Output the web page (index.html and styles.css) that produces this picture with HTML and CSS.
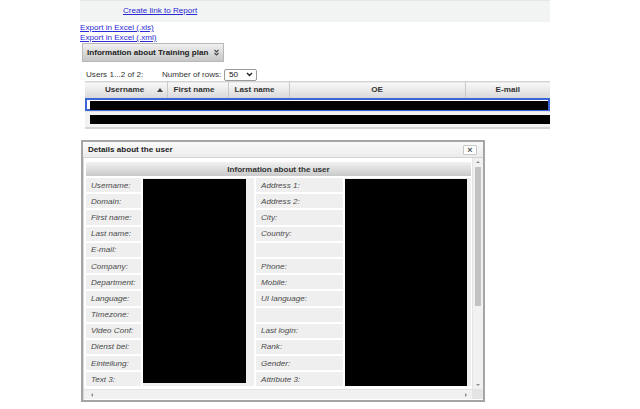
FILE: index.html
```html
<!DOCTYPE html>
<html>
<head>
<meta charset="utf-8">
<title>Training plan report</title>
<link rel="stylesheet" href="styles.css">
</head>
<body>
<div class="page">
  <div class="topbar"><a href="#" class="link">Create link to Report</a></div>
  <div class="exports">
    <a href="#">Export in Excel (.xls)</a>
    <a href="#">Export in Excel (.xml)</a>
  </div>
  <div class="toggle">
    <span>Information about Training plan</span>
    <svg class="dchev" width="7" height="8" viewBox="0 0 7 8"><polyline points="1.5,1 3.5,3 5.5,1" /><polyline points="1.5,4 3.5,6 5.5,4" /></svg>
  </div>
  <div class="toolbar">
    <span class="count">Users 1...2 of 2:</span>
    <span class="rows-label">Number of rows:</span>
    <div class="select"><span>50</span><svg width="7" height="5" viewBox="0 0 7 5"><polyline points="1,1 3.5,3.5 6,1" /></svg></div>
  </div>
  <table class="grid">
    <colgroup><col class="c1"><col class="c2"><col class="c3"><col class="c4"><col class="c5"></colgroup>
    <thead>
      <tr>
        <th><span class="th-sort">Username<svg class="sort" width="6" height="4" viewBox="0 0 6 4"><polygon points="0,4 3,0 6,4" /></svg></span></th>
        <th>First name</th>
        <th>Last name</th>
        <th>OE</th>
        <th>E-mail</th>
      </tr>
    </thead>
    <tbody>
      <tr class="row-sel"><td colspan="5"><div class="sel"><div class="redact"><div class="focus"></div></div></div></td></tr>
      <tr class="row-b"><td colspan="5"><div class="redact2"></div></td></tr>
    </tbody>
  </table>

  <div class="dialog">
    <div class="dlg-title">
      <span>Details about the user</span>
      <div class="close">×</div>
    </div>
    <div class="dlg-body">
      <div class="viewport">
        <div class="content">
          <table class="info">
            <colgroup><col class="l1"><col class="v1"><col class="l2"><col class="v2"></colgroup>
            <tr><th colspan="4" class="info-head">Information about the user</th></tr>
            <tr><td class="lab">Username:</td><td class="val" rowspan="13"><div class="black b1"></div></td><td class="lab">Address 1:</td><td class="val" rowspan="13"><div class="black b2"></div></td></tr>
            <tr><td class="lab">Domain:</td><td class="lab">Address 2:</td></tr>
            <tr><td class="lab">First name:</td><td class="lab">City:</td></tr>
            <tr><td class="lab">Last name:</td><td class="lab">Country:</td></tr>
            <tr><td class="lab">E-mail:</td><td class="lab"></td></tr>
            <tr><td class="lab">Company:</td><td class="lab">Phone:</td></tr>
            <tr><td class="lab">Department:</td><td class="lab">Mobile:</td></tr>
            <tr><td class="lab">Language:</td><td class="lab">UI language:</td></tr>
            <tr><td class="lab">Timezone:</td><td class="lab"></td></tr>
            <tr><td class="lab">Video Conf:</td><td class="lab">Last login:</td></tr>
            <tr><td class="lab">Dienst bei:</td><td class="lab">Rank:</td></tr>
            <tr><td class="lab">Einteilung:</td><td class="lab">Gender:</td></tr>
            <tr><td class="lab">Text 3:</td><td class="lab">Attribute 3:</td></tr>
          </table>
        </div>
        <div class="vscroll">
          <svg class="arr" width="10" height="8" viewBox="0 0 10 8"><polygon points="3,5 5,3 7,5" /></svg>
          <div class="vtrack"><div class="vthumb"></div></div>
          <svg class="arr" width="10" height="8" viewBox="0 0 10 8"><polygon points="3,3 5,5 7,3" /></svg>
        </div>
      </div>
      <div class="hscroll">
        <div class="htrack">
          <svg width="8" height="10" viewBox="0 0 8 10"><polygon points="5,3 3,5 5,7" /></svg>
          <svg width="8" height="10" viewBox="0 0 8 10"><polygon points="3,3 5,5 3,7" /></svg>
        </div>
        <div class="corner"></div>
      </div>
    </div>
  </div>
</div>
</body>
</html>
```

FILE: styles.css
```css
html, body {
  margin: 0;
  padding: 0;
  background: #fff;
}
body {
  font-family: "Liberation Sans", Arial, sans-serif;
  font-size: 8.1px;
  color: #333;
}
a {
  color: #2a2ad6;
  text-decoration: underline;
}
.page {
  padding-left: 80px;
  width: 470px;
}
.topbar {
  height: 21px;
  background: #f2f3f3;
  border-top: 1px solid #e6e6e6;
  padding-left: 43px;
  line-height: 20px;
}
.exports {
  display: flex;
  flex-direction: column;
  align-items: flex-start;
  line-height: 10px;
  margin-top: 1px;
}
.toggle {
  margin-left: 2px;
  display: flex;
  align-items: center;
  gap: 5px;
  padding-left: 4px;
  box-sizing: border-box;
  width: 142px;
  height: 19px;
  border: 1px solid #b8b8b8;
  background: linear-gradient(#f0f0f0, #c6c6c6);
  font-weight: bold;
  color: #222;
}
.dchev polyline {
  fill: none;
  stroke: #444;
  stroke-width: 1.1;
}
.toolbar {
  margin-top: 6px;
  height: 13px;
  display: flex;
  align-items: center;
  padding-left: 6px;
  color: #333;
}
.count {
  width: 76px;
}
.rows-label {
  width: 62px;
}
.select {
  width: 33px;
  height: 12px;
  box-sizing: border-box;
  border: 1px solid #9a9a9a;
  border-radius: 2px;
  background: #fff;
  display: flex;
  align-items: center;
  justify-content: space-between;
  padding: 0 3px 0 4px;
  color: #111;
}
.select polyline {
  fill: none;
  stroke: #222;
  stroke-width: 1.4;
}
.grid {
  margin-left: 5px;
  margin-top: 0;
  border-collapse: collapse;
  width: 465px;
  table-layout: fixed;
}
.c1 { width: 82px; }
.c2 { width: 61px; }
.c3 { width: 61px; }
.c4 { width: 176px; }
.c5 { width: 85px; }
.grid th {
  height: 16px;
  padding: 0;
  box-sizing: border-box;
  background: linear-gradient(#f9f9f9, #d8d8d8);
  border-top: 1px solid #d4d4d4;
  border-right: 1px solid #c9c9c9;
  font-weight: bold;
  color: #333;
  text-align: center;
}
.grid th:nth-child(2), .grid th:nth-child(3) {
  text-align: left;
  padding-left: 6px;
}
.grid th:last-child {
  border-right: none;
}
.th-sort {
  display: flex;
  align-items: center;
  justify-content: space-between;
  padding: 0 4px 0 20px;
}
.sort polygon {
  fill: #444;
}
.grid td {
  padding: 0;
}
.row-sel td {
  height: 13px;
}
.sel {
  height: 13px;
  box-sizing: border-box;
  border: 2px solid #3a65d9;
  padding: 1px 0 0 3px;
}
.redact {
  height: 9px;
  background: #000;
  position: relative;
}
.focus {
  position: absolute;
  left: 0;
  width: 76px;
  bottom: -1px;
  border-bottom: 1px dotted #4a6fd8;
}
.row-b td {
  height: 17px;
  background: #f2f2f2;
  border-top: 1px solid #e2e2e2;
  border-bottom: 2px solid #d6d6d6;
  box-sizing: border-box;
  padding: 3px 0 2px 5px;
}
.redact2 {
  height: 9px;
  background: #000;
}

/* dialog */
.dialog {
  margin-left: 1px;
  margin-top: 11px;
  width: 404px;
  height: 262px;
  box-sizing: border-box;
  border: 2px solid #a5a5a5;
  background: #fff;
  display: flex;
  flex-direction: column;
}
.dlg-title {
  height: 15px;
  flex: none;
  display: flex;
  align-items: center;
  justify-content: space-between;
  padding: 0 6px 0 5px;
  background: linear-gradient(#fafafa, #ececec);
  border-bottom: 1px solid #d3d3d3;
  font-weight: bold;
  color: #222;
}
.close {
  width: 14px;
  height: 10px;
  box-sizing: border-box;
  border: 1px solid #c8c8c8;
  border-radius: 1px;
  background: #fff;
  font-size: 9px;
  line-height: 8px;
  text-align: center;
  color: #555;
}
.dlg-body {
  flex: 1;
  display: flex;
  flex-direction: column;
  border-left: 1px solid #d6d6d6;
  padding-bottom: 1px;
}
.viewport {
  flex: 1;
  display: flex;
  overflow: hidden;
}
.content {
  flex: 1;
  overflow: hidden;
  padding-top: 2px;
}
.info {
  border-spacing: 2px;
  table-layout: fixed;
  width: 389px;
}
.l1 { width: 55px; }
.v1 { width: 111px; }
.l2 { width: 87px; }
.v2 { width: 126px; }
.info-head {
  height: 14px;
  padding: 0;
  background: linear-gradient(#f2f2f2, #c9c9c9);
  font-weight: bold;
  color: #333;
  text-align: center;
}
.lab {
  height: 14.2px;
  padding: 0 0 0 5px;
  background: #efefef;
  font-style: italic;
  color: #4a4a4a;
  white-space: nowrap;
}
.val {
  background: #efefef;
  padding: 0;
  vertical-align: top;
}
.black {
  background: #000;
}
.b1 {
  width: 103px;
  height: 204px;
  margin-top: 1px;
}
.b2 {
  width: 122px;
  height: 207px;
  margin-top: 1px;
}
.vscroll {
  width: 10px;
  flex: none;
  display: flex;
  flex-direction: column;
  background: #f1f1f1;
  border-left: 1px solid #e4e4e4;
}
.arr {
  flex: none;
  display: block;
}
.arr polygon, .htrack polygon {
  fill: #8a8a8a;
}
.vtrack {
  flex: 1;
  padding: 1px 2px;
}
.vthumb {
  height: 139px;
  background: #c3c3c3;
}
.hscroll {
  height: 10px;
  flex: none;
  display: flex;
}
.htrack {
  flex: 1;
  display: flex;
  justify-content: space-between;
  align-items: center;
  padding: 0 2px 0 4px;
  background: #f1f1f1;
  border-top: 1px solid #e4e4e4;
}
.htrack svg {
  display: block;
}
.corner {
  width: 11px;
  background: #e4e4e4;
}
```
